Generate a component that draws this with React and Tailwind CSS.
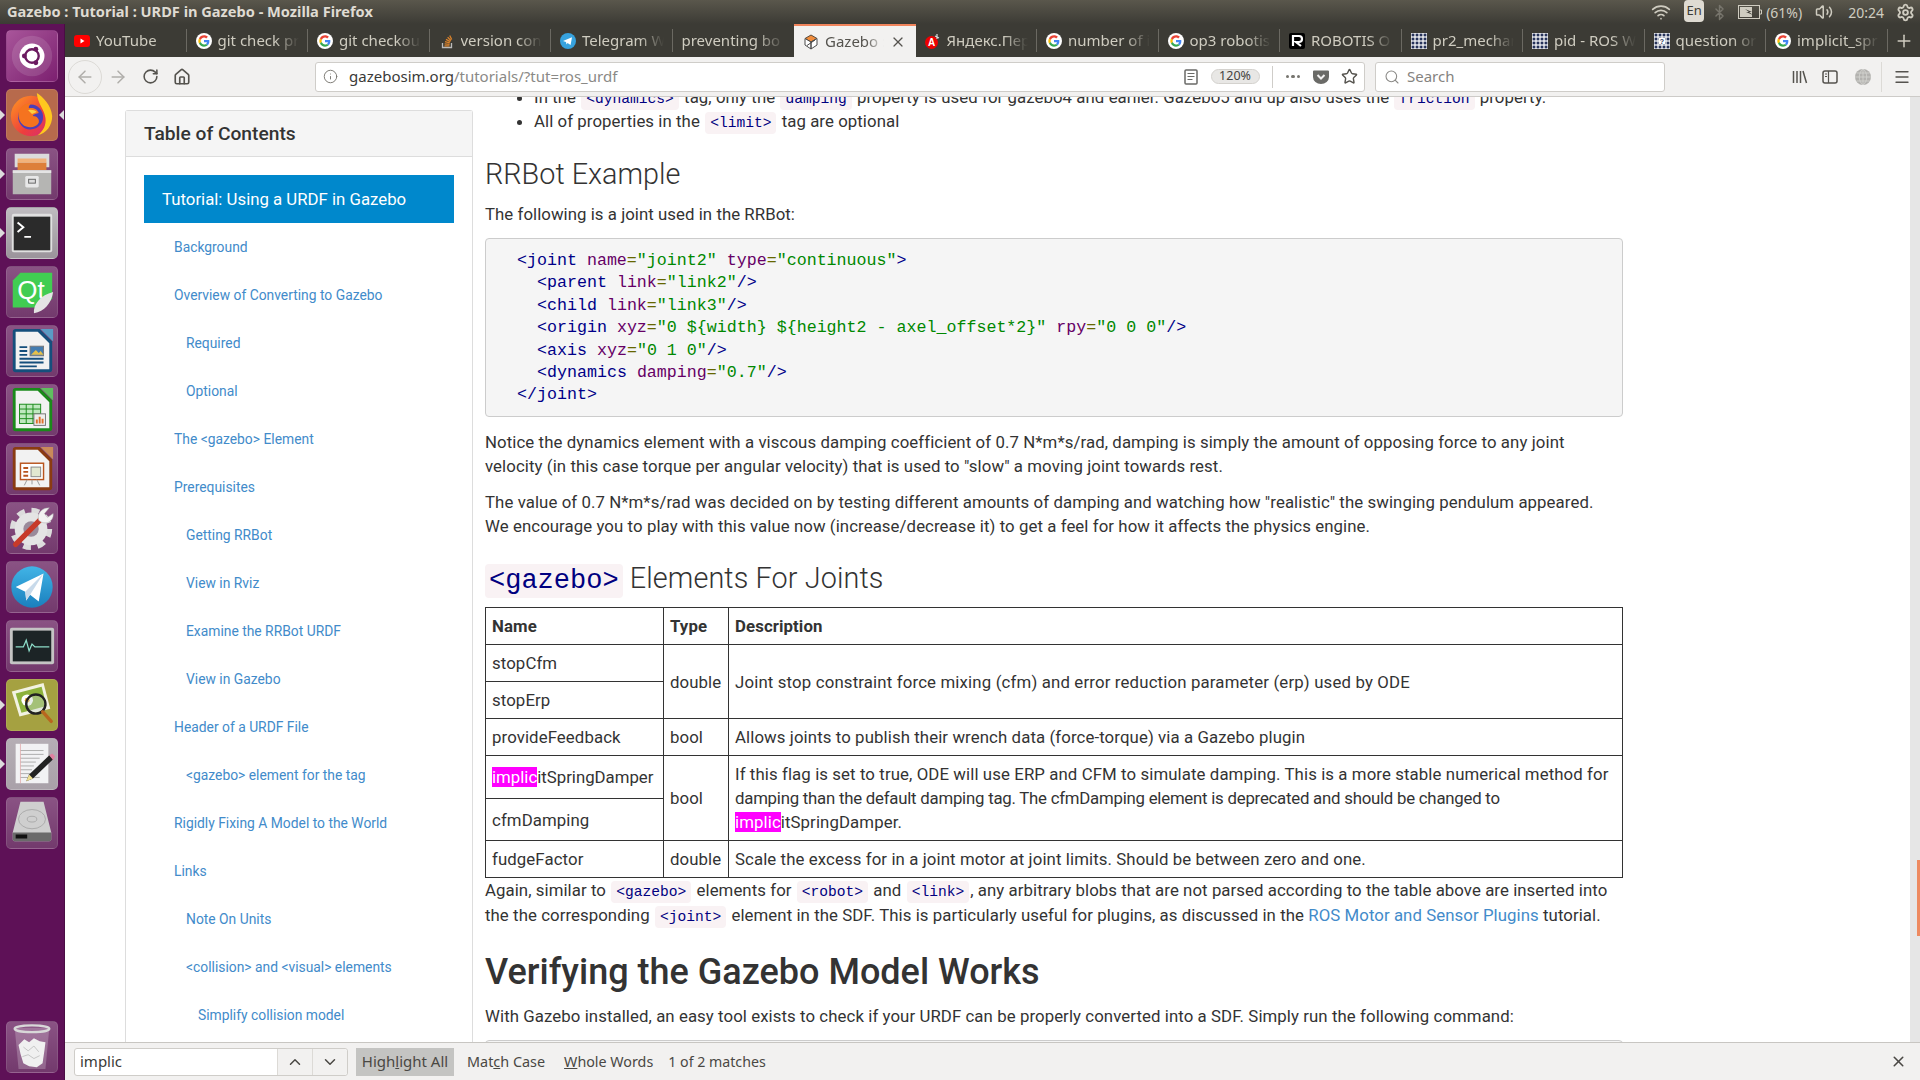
import { ArrowLeft, ArrowRight, RotateCw, Home, Info, Star, Search, Menu, X, ChevronUp, ChevronDown, Plus, Wifi, Volume2, Bluetooth, Settings } from "lucide-react";

const uiFont = "font-['Noto_Sans',sans-serif]";

function GoogleIcon() {
    return (
        <svg viewBox="0 0 48 48" className="w-4 h-4 rounded-full bg-white shrink-0">
            <g transform="translate(7 7) scale(.71)">
                <path fill="#EA4335" d="M24 9.5c3.5 0 6.7 1.2 9.2 3.6l6.9-6.9C35.9 2.4 30.5 0 24 0 14.6 0 6.5 5.4 2.6 13.2l8 6.2C12.5 13.6 17.800 9.500 24 9.500z" />
                <path fill="#4285F4" d="M46.500 24.500c0-1.600-.1-3.100-.4-4.500H24v9h12.700c-.6 2.900-2.200 5.400-4.700 7.100l7.700 6c4.500-4.200 6.800-10.300 6.800-17.600z" />
                <path fill="#FBBC05" d="M10.500 28.600c-.5-1.400-.8-3-.8-4.600s.3-3.200.8-4.600l-8-6.200C.9 16.500 0 20.100 0 24s.9 7.500 2.600 10.800l7.900-6.200z" />
                <path fill="#34A853" d="M24 48c6.500 0 11.900-2.100 15.900-5.800l-7.700-6c-2.200 1.500-4.900 2.300-8.200 2.300-6.200 0-11.500-4.200-13.400-9.900l-8 6.200C6.500 42.600 14.600 48 24 48z" />
            </g>
        </svg>
    );
}

function YoutubeIcon() {
    return (
        <svg viewBox="0 0 16 16" className="w-4 h-4 shrink-0">
            <rect x="0" y="2" width="16" height="12" rx="3" fill="#f00" />
            <path d="M6.500 5.500 10.500 8 6.500 10.500z" fill="#fff" />
        </svg>
    );
}

function StackIcon() {
    return (
        <svg viewBox="0 0 16 16" className="w-4 h-4 shrink-0" fill="none" stroke="#d9822b" strokeWidth="1.300">
            <path d="M3.500 10v4.500h9V10" stroke="#bbb" />
            <path d="M5.500 12.800h5M5.600 10.800l5 .5M6 8.600l4.800 1.300M7 6.300l4.400 2.300M8.600 4.200l3.400 3.300M10.700 2.500l2 4" />
        </svg>
    );
}

function TelegramTab() {
    return (
        <svg viewBox="0 0 16 16" className="w-4 h-4 shrink-0">
            <circle cx="8" cy="8" r="8" fill="#37a2de" />
            <path d="M3 8 12 4.300 10.600 12 7.500 9.900 6.500 11.500 6 9z" fill="#fff" />
        </svg>
    );
}

function GazeboTab() {
    return (
        <svg viewBox="0 0 16 16" className="w-4 h-4 shrink-0" strokeWidth="1">
            <path d="M8 1 14 4.500 8 8 2 4.500z" fill="#f08c3c" stroke="#5a4a3a" />
            <path d="M2 4.500v6.500l6 4V8zM14 4.500v6.500l-6 4V8z" fill="#fff" stroke="#4a4a4a" />
            <path d="M4 11.500 12 6" stroke="#4a4a4a" />
        </svg>
    );
}

function YandexTab() {
    return (
        <svg viewBox="0 0 16 16" className="w-4 h-4 shrink-0">
            <circle cx="6.500" cy="9.500" r="6.500" fill="#e00" />
            <text x="6.500" y="13" fontSize="10" fontWeight="700" fill="#fff" textAnchor="middle" fontFamily="Liberation Sans">A</text>
            <path d="M12 1v5M10 3l4 2" stroke="#ddd" strokeWidth="1.200" />
        </svg>
    );
}

function RobotisTab() {
    return (
        <svg viewBox="0 0 16 16" className="w-4 h-4 shrink-0">
            <rect width="16" height="16" rx="2" fill="#000" />
            <path d="M4 13V3h6a3 3 0 0 1 0 6H7l5 4" fill="none" stroke="#fff" strokeWidth="2.200" />
        </svg>
    );
}

function GridTab({ mark }) {
    const dots = [];
    for (let y = 0; y < 4; y++) for (let x = 0; x < 4; x++) dots.push([x, y]);
    return (
        <svg viewBox="0 0 16 16" className="w-4 h-4 shrink-0">
            <rect width="16" height="16" fill="#fff" />
            {dots.map(([x, y]) => <rect key={x + "-" + y} x={x * 4 + .6} y={y * 4 + .6} width="2.800" height="2.800" fill="#26325a" />)}
            {mark && <rect x="5" y="5" width="6" height="6" fill="#fff" />}
            {mark && <text x="8" y="11" fontSize="7" fontWeight="700" fill="#26325a" textAnchor="middle" fontFamily="Liberation Sans">?</text>}
        </svg>
    );
}

// titles are only as long as the tab strip shows them
const tabs = [
    { icon: <YoutubeIcon />, title: "YouTube" },
    { icon: <GoogleIcon />, title: "git check pr" },
    { icon: <GoogleIcon />, title: "git checkou" },
    { icon: <StackIcon />, title: "version con" },
    { icon: <TelegramTab />, title: "Telegram W" },
    { icon: null, title: "preventing bo" },
    { icon: <GazeboTab />, title: "Gazebo :", active: true },
    { icon: <YandexTab />, title: "Яндекс.Пер" },
    { icon: <GoogleIcon />, title: "number of i" },
    { icon: <GoogleIcon />, title: "op3 robotis" },
    { icon: <RobotisTab />, title: "ROBOTIS O" },
    { icon: <GridTab />, title: "pr2_mechar" },
    { icon: <GridTab />, title: "pid - ROS W" },
    { icon: <GridTab mark />, title: "question or" },
    { icon: <GoogleIcon />, title: "implicit_spr" },
];

function Tab({ tab, next }) {
    if (tab.active) {
        return (
            <div className="w-[121.5px] shrink-0 h-full flex items-center pl-[9px] pr-[10px] gap-[6px] bg-[#f2f1f0] border-t-2 border-[#f0845c] text-[#55534e]">
                {tab.icon}
                <span className="flex-1 overflow-hidden whitespace-nowrap [mask-image:linear-gradient(to_right,black_70%,transparent)]">{tab.title}</span>
                <X size={16} strokeWidth={1.800} className="text-[#55534e] shrink-0" />
            </div>
        );
    }
    return (
        <div className="w-[121.5px] shrink-0 h-full py-[5px]">
            <div className={"h-full flex items-center pl-[9px] pr-2 gap-[6px] " + (next ? "" : "border-r border-[#6b6962]")}>
                {tab.icon}
                <span className="flex-1 overflow-hidden whitespace-nowrap text-[#cfccc0] [mask-image:linear-gradient(to_right,black_70%,transparent)]">{tab.title}</span>
            </div>
        </div>
    );
}

function TopBar() {
    return (
        <div className={"h-6 shrink-0 flex items-center bg-gradient-to-b from-[#5a574c] to-[#3c3b35] text-[#dfdbd2] text-[14px] " + uiFont}>
            <span className="ml-[7px] font-bold text-[14.600px]">Gazebo : Tutorial : URDF in Gazebo - Mozilla Firefox</span>
            <div className="ml-auto flex items-center text-[#cfccc0]">
                <Wifi size={20} strokeWidth={2} />
                <span className="ml-[13px] w-5 h-[22px] -mt-[2px] flex items-center justify-center rounded-sm bg-[#dfdbd2] text-[#3c3b35] text-[13px]">En</span>
                <Bluetooth size={17} strokeWidth={2} className="ml-[7px] text-[#77756c]" />
                <svg viewBox="0 0 24 14" className="ml-[10px] w-6 h-[14px]" fill="none">
                    <rect x=".5" y=".5" width="21" height="13" stroke="#cfccc0" />
                    <rect x="2" y="2" width="12" height="10" fill="#cfccc0" />
                    <path d="M22 5h1.500v4H22" stroke="#cfccc0" />
                    <path d="M7 4l7 3-3 0 4 3-7-3 3 0z" fill="#3c3b35" />
                </svg>
                <span className="ml-[4px]">(61%)</span>
                <Volume2 size={18} strokeWidth={2} className="ml-[13px]" />
                <span className="ml-[15px]">20:24</span>
                <Settings size={19} strokeWidth={2.400} className="ml-[12px] mr-[5px]" />
            </div>
        </div>
    );
}

function Tile({ bg, left, right, children }) {
    return (
        <div className="relative h-[52px] w-[52px]">
            <div className={"w-full h-full rounded-[5px] border border-white/10 overflow-hidden " + bg}>
                {children}
            </div>
            {left && <div className="absolute left-[-6px] top-[21px] border-y-[5px] border-l-[5px] border-y-transparent border-l-[#dcdcdc]"></div>}
            {right && <div className="absolute right-[-6px] top-[21px] border-y-[5px] border-r-[5px] border-y-transparent border-r-[#dcdcdc]"></div>}
        </div>
    );
}

function Launcher() {
    const plain = "bg-gradient-to-b from-[#8a5384] to-[#733a6d]";
    return (
        <div className="w-[65px] shrink-0 h-full bg-[#5e1157] border-r border-[#4a0d44] flex flex-col items-center pt-[6px] gap-[7px] pb-[7px]">
            <Tile bg="bg-gradient-to-br from-[#a8559a] to-[#7c1f70]">
                <svg viewBox="0 0 52 52" className="w-full h-full">
                    <circle cx="26" cy="26" r="21" fill="#fff" opacity=".12" />
                    <circle cx="26" cy="26" r="13" fill="#fff" />
                    <circle cx="26" cy="26" r="7" fill="none" stroke="#6b1a60" strokeWidth="2.500" />
                    <circle cx="18" cy="26" r="2.500" fill="#6b1a60" />
                    <circle cx="30" cy="19" r="2.500" fill="#6b1a60" />
                    <circle cx="30" cy="33" r="2.500" fill="#6b1a60" />
                </svg>
            </Tile>
            <Tile bg="bg-[#b76a4c]" left right>
                <svg viewBox="0 0 52 52" className="w-full h-full">
                    <defs>
                        <linearGradient id="fx" x1="0" y1="0" x2="1" y2="1">
                            <stop offset="0" stopColor="#ff9a1f" />
                            <stop offset=".6" stopColor="#ee3d3d" />
                            <stop offset="1" stopColor="#d22c7a" />
                        </linearGradient>
                    </defs>
                    <circle cx="25" cy="27" r="21" fill="url(#fx)" />
                    <path d="M31 3c6 4 15 12 16 24 0 10-6 18-15 20 6-5 9-11 8-18-1-9-8-14-9-26z" fill="#ffc81f" />
                    <path d="M25 15a13 13 0 1 1-1 26 13 13 0 0 1 1-26z" fill="#4c3fb8" />
                    <path d="M12 22c2-5 8-9 13-8-2 2-3 4-2 5 4-1 9 1 10 5-2 1-6 1-6 3 4 0 7 3 6 7-2 4-8 6-13 4-6-2-9-9-8-16z" fill="#f5731f" />
                    <path d="M22 21c3-1 7 0 9 2l-5 2z" fill="#ffd040" />
                </svg>
            </Tile>
            <Tile bg={plain} left>
                <svg viewBox="0 0 52 52" className="w-full h-full">
                    <path d="M8 5h36v14H8z" fill="#dcdcdc" />
                    <path d="M11 14h30v8H11z" fill="#dd7f3a" />
                    <path d="M11 10h30v4H11z" fill="#f2b27a" />
                    <path d="M6 22h40v25H6z" fill="#b5b5b3" />
                    <path d="M6 22h40v3H6z" fill="#e4e4e4" />
                    <rect x="19" y="28" width="14" height="12" rx="1.500" fill="#e8e8e8" />
                    <rect x="22" y="31" width="8" height="5" fill="#666" />
                    <rect x="23" y="32" width="6" height="3" fill="#ddd" />
                </svg>
            </Tile>
            <Tile bg="bg-gradient-to-b from-[#bfbcc0] to-[#9b949b]" left>
                <svg viewBox="0 0 52 52" className="w-full h-full">
                    <rect x="5" y="6" width="42" height="40" rx="2" fill="#e0e0e0" />
                    <rect x="7" y="9" width="38" height="35" fill="#2b2b2b" />
                    <path d="M11 15l6 5-6 5" fill="none" stroke="#fff" strokeWidth="2" />
                    <path d="M18 30h7" stroke="#fff" strokeWidth="2" />
                </svg>
            </Tile>
            <Tile bg={plain}>
                <svg viewBox="0 0 52 52" className="w-full h-full">
                    <path d="M14 6h33v27l-9 9H6V14z" fill="#41cd52" />
                    <text x="25" y="33" fontSize="27" fontFamily="Liberation Sans" fill="#fff" textAnchor="middle">Qt</text>
                    <path d="M48 26c-2 12-9 20-20 22 -1-9 7-19 20-22z" fill="#e4e4e4" />
                </svg>
            </Tile>
            <Tile bg={plain}>
                <svg viewBox="0 0 52 52" className="w-full h-full">
                    <path d="M35 3h13v13z" fill="#5a9bc4" />
                    <path d="M9 3h25l13 13v29a3 3 0 0 1-3 3H9a3 3 0 0 1-3-3V6a3 3 0 0 1 3-3z" fill="#154f7c" />
                    <path d="M9 6h23l12 12v27H9z" fill="#f2f2f2" />
                    <path d="M13 22h8M13 26h8M13 30h8M13 34h25M13 38h25M13 42h18" stroke="#154f7c" strokeWidth="2" />
                    <rect x="24" y="21" width="14" height="10" fill="#447cb0" stroke="#777" />
                    <path d="M25 30l5-5 3 3 2-2 3 4z" fill="#e6c04a" />
                </svg>
            </Tile>
            <Tile bg={plain}>
                <svg viewBox="0 0 52 52" className="w-full h-full">
                    <path d="M35 3h13v13z" fill="#5fbf5f" />
                    <path d="M9 3h25l13 13v29a3 3 0 0 1-3 3H9a3 3 0 0 1-3-3V6a3 3 0 0 1 3-3z" fill="#1a8a1a" />
                    <path d="M9 6h23l12 12v27H9z" fill="#f2f2f2" />
                    <rect x="13" y="20" width="22" height="20" fill="#bfe8bf" stroke="#1a8a1a" />
                    <path d="M13 25h22M13 30h22M13 35h22M20 20v20M27 20v20" stroke="#1a8a1a" />
                    <rect x="28" y="30" width="12" height="12" fill="#eee" stroke="#777" />
                    <path d="M31 40v-4M34 40v-7M37 40v-5" stroke="#e0702a" strokeWidth="2" />
                </svg>
            </Tile>
            <Tile bg={plain}>
                <svg viewBox="0 0 52 52" className="w-full h-full">
                    <path d="M35 3h13v13z" fill="#c98a5a" />
                    <path d="M9 3h25l13 13v29a3 3 0 0 1-3 3H9a3 3 0 0 1-3-3V6a3 3 0 0 1 3-3z" fill="#8a3b12" />
                    <path d="M9 6h23l12 12v27H9z" fill="#f2f2f2" />
                    <rect x="14" y="20" width="24" height="17" fill="#fff" stroke="#b8541e" strokeWidth="1.500" />
                    <path d="M17 25h5M17 29h5M17 33h5" stroke="#b8541e" strokeWidth="2" />
                    <rect x="25" y="24" width="10" height="10" fill="#e2e8d0" stroke="#888" />
                    <path d="M21 37l-3 6M31 37l3 6M26 37v5" stroke="#999" />
                </svg>
            </Tile>
            <Tile bg={plain}>
                <svg viewBox="0 0 52 52" className="w-full h-full">
                    <circle cx="25" cy="27" r="19" fill="none" stroke="#dcdcdc" strokeWidth="6" strokeDasharray="8 6.900" />
                    <circle cx="25" cy="27" r="17" fill="#e4e4e4" />
                    <circle cx="25" cy="27" r="8" fill="#9a8a9a" />
                    <path d="M9 43 35 17" stroke="#c73a2a" strokeWidth="5.500" strokeLinecap="round" />
                    <path d="M33 18c-2-6 2-13 11-13l-5 6 3 4 6-4c1 8-8 13-15 7z" fill="#f2f2f2" stroke="#aaa" strokeWidth=".5" />
                </svg>
            </Tile>
            <Tile bg={plain}>
                <svg viewBox="0 0 52 52" className="w-full h-full">
                    <defs>
                        <linearGradient id="tg" x1="0" y1="0" x2="0" y2="1">
                            <stop offset="0" stopColor="#41b4e6" />
                            <stop offset="1" stopColor="#1a7fbd" />
                        </linearGradient>
                    </defs>
                    <circle cx="26" cy="26" r="21.500" fill="url(#tg)" />
                    <path d="M9 26 38 12 33 41 24 34 20 40 19 31z" fill="#fff" />
                    <path d="M19 31 38 12 24 34 20 40z" fill="#c8daea" />
                </svg>
            </Tile>
            <Tile bg={plain}>
                <svg viewBox="0 0 52 52" className="w-full h-full">
                    <rect x="3" y="7" width="46" height="38" rx="2" fill="#c4c4c4" />
                    <rect x="6" y="10" width="40" height="32" fill="#1c2426" />
                    <path d="M9 27h8l3-7 3 11 3-7 3 3h15" fill="none" stroke="#8cdcc8" strokeWidth="1.300" />
                </svg>
            </Tile>
            <Tile bg="bg-[#a5a141]" left>
                <svg viewBox="0 0 52 52" className="w-full h-full">
                    <path d="M5 12 38 3l7 27-32 8z" fill="#f2f2e2" />
                    <path d="M9 14 36 7l5 20-26 7z" fill="#8db23c" />
                    <circle cx="21" cy="21" r="6" fill="#fff" />
                    <circle cx="21" cy="21" r="2.500" fill="#e8a020" />
                    <circle cx="30" cy="25" r="10" fill="#c8d8d0" fillOpacity=".4" stroke="#222" strokeWidth="2.500" />
                    <path d="M37 33l9 10" stroke="#b8661e" strokeWidth="3.500" strokeLinecap="round" />
                </svg>
            </Tile>
            <Tile bg="bg-gradient-to-b from-[#b5aeb5] to-[#a9a1a9]" left>
                <svg viewBox="0 0 52 52" className="w-full h-full">
                    <rect x="9" y="5" width="34" height="41" fill="#f2f2f4" />
                    <path d="M14 12h24M14 16h24M14 20h20M14 24h16M14 28h14M14 32h12M14 36h10M14 40h20" stroke="#999" strokeWidth=".8" />
                    <path d="M14 5v41" stroke="#e0a0a0" strokeWidth=".7" />
                    <path d="M44 17l4 4-21 20-7 3 3-7z" fill="#222" />
                    <path d="M44 17l3-2 3 3-2 4z" fill="#e080a0" />
                    <path d="M23 37l4 4-7 3z" fill="#f0e090" />
                </svg>
            </Tile>
            <Tile bg={plain}>
                <svg viewBox="0 0 52 52" className="w-full h-full">
                    <path d="M14 4h24l8 32v7a2 2 0 0 1-2 2H8a2 2 0 0 1-2-2v-7z" fill="#cfcfcf" />
                    <ellipse cx="26" cy="22" rx="14" ry="10" fill="none" stroke="#aaa" strokeWidth="1" />
                    <ellipse cx="26" cy="22" rx="5" ry="3" fill="none" stroke="#aaa" strokeWidth="1" />
                    <path d="M6 36h40v7a2 2 0 0 1-2 2H8a2 2 0 0 1-2-2z" fill="#6a6a6a" />
                    <path d="M9 38h12v4H9z" fill="#111" />
                </svg>
            </Tile>
            <div className="mt-auto">
                <Tile bg={plain}>
                    <svg viewBox="0 0 52 52" className="w-full h-full">
                        <path d="M8 6h36l-4 43H12z" fill="#fff" fillOpacity=".22" />
                        <ellipse cx="26" cy="7" rx="18" ry="3.500" fill="none" stroke="#d8d8d8" strokeWidth="2.500" />
                        <path d="M12 24l6-6 5 3 5-4 6 3 6 1-1 8-2 14-6 4-8-1-6-3-3-10z" fill="#f0f0f0" />
                        <path d="M17 26l5 4 6-5 5 6M16 36l6-2 6 4 6-3" fill="none" stroke="#c4c4c4" />
                    </svg>
                </Tile>
            </div>
        </div>
    );
}

function NavBar() {
    return (
        <div className={"h-10 shrink-0 flex items-center bg-[#f2f1f0] border-b border-[#cdcbc8] text-[#55534e] " + uiFont}>
            <div className="ml-[3px] w-[34px] h-[34px] rounded-full border border-[#dcdad6] flex items-center justify-center">
                <ArrowLeft size={20} strokeWidth={1.800} className="text-[#b0aeaa]" />
            </div>
            <ArrowRight size={20} strokeWidth={1.800} className="ml-[6px] text-[#b0aeaa]" />
            <RotateCw size={17} strokeWidth={2.200} className="ml-[14px]" />
            <Home size={18} strokeWidth={2.200} className="ml-[14px]" />
            <div className="ml-[124px] w-[1050px] h-[30px] bg-white border border-[#cfcdc9] rounded-[3px] flex items-center text-[15px]">
                <Info size={15} strokeWidth={1.500} className="ml-[7px] text-[#77756f]" />
                <span className="ml-[11px] text-[#3a3a38]">gazebosim.org<span className="text-[#8a8986]">/tutorials/?tut=ros_urdf</span></span>
                <div className="ml-auto flex items-center">
                    <svg viewBox="0 0 14 16" className="w-[14px] h-4" fill="none" stroke="#6a6a67" strokeWidth="1.500">
                        <rect x="1" y="1" width="12" height="14" rx="1" />
                        <path d="M3.500 4.500h7M3.500 7.500h7M3.500 10.500h5" strokeWidth="1" />
                    </svg>
                    <span className="ml-[13px] w-[49px] h-[15px] flex items-center justify-center rounded-full bg-[#e8e7e5] border border-[#d4d2ce] text-[12.500px] text-[#45433f]">120%</span>
                    <div className="ml-[12px] w-px h-[22px] bg-[#cfcdc9]"></div>
                    <div className="ml-[13px] flex gap-[2px]">
                        <span className="w-[3.500px] h-[3.500px] rounded-full bg-[#77756f]"></span>
                        <span className="w-[3.500px] h-[3.500px] rounded-full bg-[#77756f]"></span>
                        <span className="w-[3.500px] h-[3.500px] rounded-full bg-[#77756f]"></span>
                    </div>
                    <svg viewBox="0 0 16 16" className="ml-[13px] w-4 h-4">
                        <path d="M1 1.500h14a1 1 0 0 1 1 1V8a8 7 0 0 1-16 0V2.500a1 1 0 0 1 1-1z" fill="#6a6a67" />
                        <path d="M4.500 6 8 9.500 11.500 6" fill="none" stroke="#f2f1f0" strokeWidth="2" />
                    </svg>
                    <Star size={17} strokeWidth={2} className="ml-[12px] mr-[6px] text-[#55534e]" />
                </div>
            </div>
            <div className="ml-[10px] w-[290px] h-[30px] bg-white border border-[#cfcdc9] rounded-[3px] flex items-center text-[15px]">
                <Search size={16} strokeWidth={1.600} className="ml-2 text-[#8a8986]" />
                <span className="ml-[7px] text-[#85837f]">Search</span>
            </div>
            <svg viewBox="0 0 16 16" className="ml-[127px] w-4 h-4" fill="none" stroke="#55534e" strokeWidth="1.500">
                <path d="M1.500 2v12M5 2v12M8.500 2v12M11 2l3.500 12" />
            </svg>
            <svg viewBox="0 0 16 16" className="ml-[14px] w-4 h-4" fill="none" stroke="#55534e" strokeWidth="1.500">
                <rect x="1" y="2" width="14" height="12" rx="2" />
                <path d="M6.500 2v12M3 5h2M3 7.500h2" strokeWidth="1.200" />
            </svg>
            <svg viewBox="0 0 16 16" className="ml-[17px] w-4 h-4" fill="none" stroke="#d6d5d2" strokeWidth=".8">
                <circle cx="8" cy="8" r="8" fill="#b3b2af" stroke="none" />
                <path d="M0 8h16M1.500 4h13M1.500 12h13M8 0v16M8 0c-5 4-5 12 0 16M8 0c5 4 5 12 0 16" />
            </svg>
            <div className="ml-[10px] w-px h-[30px] bg-[#dcdad6]"></div>
            <Menu size={18} strokeWidth={1.800} className="ml-[11px]" />
        </div>
    );
}

const tocItems = [
    ["Background", "pl-[30px]"],
    ["Overview of Converting to Gazebo", "pl-[30px]"],
    ["Required", "pl-[42px]"],
    ["Optional", "pl-[42px]"],
    ["The <gazebo> Element", "pl-[30px]"],
    ["Prerequisites", "pl-[30px]"],
    ["Getting RRBot", "pl-[42px]"],
    ["View in Rviz", "pl-[42px]"],
    ["Examine the RRBot URDF", "pl-[42px]"],
    ["View in Gazebo", "pl-[42px]"],
    ["Header of a URDF File", "pl-[30px]"],
    ["<gazebo> element for the tag", "pl-[42px]"],
    ["Rigidly Fixing A Model to the World", "pl-[30px]"],
    ["Links", "pl-[30px]"],
    ["Note On Units", "pl-[42px]"],
    ["<collision> and <visual> elements", "pl-[42px]"],
    ["Simplify collision model", "pl-[54px]"],
];

function Sidebar() {
    return (
        <div className="w-[348px] shrink-0 mt-[13px] border-x border-t border-[#ddd] rounded-t-[3px] h-[1000px]">
            <div className="h-[46px] pt-px bg-[#f5f5f5] border-b border-[#ddd] flex items-center pl-[18px] text-[#333] text-[19.200px] font-medium">Table of Contents</div>
            <div className="px-[18px] pt-[18px]">
                <div className="h-12 pt-px bg-[#0088cc] text-white text-[16.800px] flex items-center pl-[18px]">Tutorial: Using a URDF in Gazebo</div>
                {tocItems.map(([name, indent]) => (
                    <div key={name} className={"h-12 pt-px flex items-center text-[13.850px] text-[#428bca] " + indent}>{name}</div>
                ))}
            </div>
        </div>
    );
}

function C({ children }) {
    return <code className="font-['Liberation_Mono',monospace] text-[14.600px] leading-none tracking-normal text-[#000080] bg-[#f9f2f4] rounded-[4px] px-[5px] py-[3px] mx-[1px]">{children}</code>;
}

function Hl({ children }) {
    return <span className="bg-[#ff00ff] text-white">{children}</span>;
}

function CodeLine({ indent, parts }) {
    return (
        <div className={"h-[22.400px] " + (indent ? "pl-[20px]" : "")}>
            {parts.map(([type, text], i) => {
                const color = { t: "text-[#000088]", a: "text-[#660066]", p: "text-[#666600]", s: "text-[#008800]" }[type];
                return <span key={i} className={color}>{text}</span>;
            })}
        </div>
    );
}

function Code() {
    return (
        <div className="mt-[12px] h-[179px] bg-[#f5f5f5] border border-[#ccc] rounded-[4px] pl-[31px] pt-[11px] font-['Liberation_Mono',monospace] text-[16.650px] leading-[22.400px] whitespace-pre tracking-normal">
            <CodeLine parts={[["t", "<joint "], ["a", "name"], ["p", "="], ["s", '"joint2" '], ["a", "type"], ["p", "="], ["s", '"continuous"'], ["t", ">"]]} />
            <CodeLine indent parts={[["t", "<parent "], ["a", "link"], ["p", "="], ["s", '"link2"'], ["t", "/>"]]} />
            <CodeLine indent parts={[["t", "<child "], ["a", "link"], ["p", "="], ["s", '"link3"'], ["t", "/>"]]} />
            <CodeLine indent parts={[["t", "<origin "], ["a", "xyz"], ["p", "="], ["s", '"0 ${width} ${height2 - axel_offset*2}" '], ["a", "rpy"], ["p", "="], ["s", '"0 0 0"'], ["t", "/>"]]} />
            <CodeLine indent parts={[["t", "<axis "], ["a", "xyz"], ["p", "="], ["s", '"0 1 0"'], ["t", "/>"]]} />
            <CodeLine indent parts={[["t", "<dynamics "], ["a", "damping"], ["p", "="], ["s", '"0.7"'], ["t", "/>"]]} />
            <CodeLine parts={[["t", "</joint>"]]} />
        </div>
    );
}

function Td({ children, rowSpan, className }) {
    return <td rowSpan={rowSpan} className={"border border-[#333] px-[6px] align-middle " + (className || "")}>{children}</td>;
}

function JointTable() {
    return (
        <table className="mt-[9px] w-[1138px] table-fixed border-collapse leading-[24px] tracking-[0.1px]">
            <colgroup>
                <col className="w-[178px]" />
                <col className="w-[65px]" />
                <col />
            </colgroup>
            <tbody>
                <tr className="h-[37px] font-bold"><Td>Name</Td><Td>Type</Td><Td>Description</Td></tr>
                <tr className="h-[37px]"><Td>stopCfm</Td><Td rowSpan={2}>double</Td><Td rowSpan={2} className="tracking-[0.16px]">Joint stop constraint force mixing (cfm) and error reduction parameter (erp) used by ODE</Td></tr>
                <tr className="h-[37px]"><Td>stopErp</Td></tr>
                <tr className="h-[37px]"><Td>provideFeedback</Td><Td>bool</Td><Td>Allows joints to publish their wrench data (force-torque) via a Gazebo plugin</Td></tr>
                <tr className="h-[43px]">
                    <Td className="whitespace-nowrap tracking-normal"><Hl>implic</Hl>itSpringDamper</Td>
                    <Td rowSpan={2}>bool</Td>
                    <Td rowSpan={2} className="whitespace-nowrap">
                        If this flag is set to true, ODE will use ERP and CFM to simulate damping. This is a more stable numerical method for<br />
                        <span className="tracking-[-0.23px]">damping than the default damping tag. The cfmDamping element is deprecated and should be changed to</span><br />
                        <Hl>implic</Hl>itSpringDamper.
                    </Td>
                </tr>
                <tr className="h-[42px]"><Td>cfmDamping</Td></tr>
                <tr className="h-[37px]"><Td>fudgeFactor</Td><Td>double</Td><Td>Scale the excess for in a joint motor at joint limits. Should be between zero and one.</Td></tr>
            </tbody>
        </table>
    );
}

function Article() {
    return (
        <div className="ml-[12px] w-[1138px] shrink-0 -mt-[12px] text-[16.800px] leading-[24px] text-[#333]">
            <ul className="list-disc pl-[49px] tracking-[0.07px]">
                <li className="whitespace-nowrap">In the <C>&lt;dynamics&gt;</C> tag, only the <C>damping</C> property is used for gazebo4 and earlier. Gazebo5 and up also uses the <C>friction</C> property.</li>
                <li>All of properties in the <C>&lt;limit&gt;</C> tag are optional</li>
            </ul>
            <h2 className="mt-[24px] h-[34px] text-[28.800px] leading-[34px] font-light">RRBot Example</h2>
            <p className="mt-[11px] tracking-[0.05px]">The following is a joint used in the RRBot:</p>
            <Code />
            <p className="mt-[13px] whitespace-nowrap tracking-[0.09px]">Notice the dynamics element with a viscous damping coefficient of 0.7 N*m*s/rad, damping is simply the amount of opposing force to any joint<br />velocity (in this case torque per angular velocity) that is used to "slow" a moving joint towards rest.</p>
            <p className="mt-[12px] whitespace-nowrap tracking-[0.08px]">The value of 0.7 N*m*s/rad was decided on by testing different amounts of damping and watching how "realistic" the swinging pendulum appeared.<br />We encourage you to play with this value now (increase/decrease it) to get a feel for how it affects the physics engine.</p>
            <h2 className="mt-[20px] h-[40px] text-[28.800px] leading-[40px] font-light tracking-[0.1px]"><code className="font-['Liberation_Mono',monospace] text-[27px] tracking-normal text-[#000080] bg-[#f9f2f4] rounded-[4px] px-[4px] py-[2px]">&lt;gazebo&gt;</code> Elements For Joints</h2>
            <JointTable />
            <p className="leading-[25px] whitespace-nowrap tracking-[0.07px]">Again, similar to <C>&lt;gazebo&gt;</C> elements for <C>&lt;robot&gt;</C> and <C>&lt;link&gt;</C>, any arbitrary blobs that are not parsed according to the table above are inserted into<br />the the corresponding <C>&lt;joint&gt;</C> element in the SDF. This is particularly useful for plugins, as discussed in the <span className="text-[#428bca]">ROS Motor and Sensor Plugins</span> tutorial.</p>
            <h1 className="mt-[22px] h-[44px] text-[36px] leading-[44px] font-medium">Verifying the Gazebo Model Works</h1>
            <p className="mt-[10px] tracking-[0.08px]">With Gazebo installed, an easy tool exists to check if your URDF can be properly converted into a SDF. Simply run the following command:</p>
            <div className="mt-[12px] h-[60px] bg-[#f5f5f5] border border-[#ccc] rounded-[4px]"></div>
        </div>
    );
}

function FindBar() {
    return (
        <div className={"h-[38px] shrink-0 flex items-center bg-[#f2f1f0] border-t border-[#c8c6c2] text-[15px] text-[#4a4844] " + uiFont}>
            <div className="ml-[9px] w-[274px] h-7 bg-white border border-[#cfcdc9] rounded-[3px] flex items-center">
                <span className="flex-1 pl-[5px] text-[#3a3a38]">implic</span>
                <div className="w-[35px] h-full border-l border-[#dcdad6] bg-[#f2f1f0] flex items-center justify-center"><ChevronUp size={18} strokeWidth={2} /></div>
                <div className="w-[35px] h-full border-l border-[#dcdad6] bg-[#f2f1f0] flex items-center justify-center rounded-r-[3px]"><ChevronDown size={18} strokeWidth={2} /></div>
            </div>
            <div className="ml-2 w-[98px] h-7 bg-[#c4c4c2] flex items-center justify-center">High<u>l</u>ight All</div>
            <span className="ml-[13px] text-[14.400px]">Mat<u>c</u>h Case</span>
            <span className="ml-[19px] text-[14.300px]"><u>W</u>hole Words</span>
            <span className="ml-[15px] text-[14.200px]">1 of 2 matches</span>
            <X size={17} strokeWidth={2.200} className="ml-auto mr-[13px]" />
        </div>
    );
}

export default function App() {
    return (
        <div className="h-screen w-screen overflow-hidden flex flex-col font-['Roboto',sans-serif]">
            <TopBar />
            <div className="flex-1 flex min-h-0">
                <Launcher />
                <div className="flex-1 min-w-0 flex flex-col">
                    <div className={"h-[33px] shrink-0 flex items-center bg-[#3c3b35] text-[15px] " + uiFont}>
                        {tabs.map((tab, i) => (
                            <Tab key={i} tab={tab} next={tabs[i + 1] && tabs[i + 1].active || tab.active} />
                        ))}
                        <Plus size={20} strokeWidth={1.800} className="ml-[6px] text-[#cfccc0]" />
                    </div>
                    <NavBar />
                    <div className="flex-1 min-h-0 flex bg-white">
                        <div className="flex-1 min-w-0 flex overflow-hidden pl-[60px]">
                            <Sidebar />
                            <Article />
                        </div>
                        <div className="relative w-[10px] shrink-0 bg-[#e6e6e6]">
                            <div className="absolute right-0 top-[763px] w-[3px] h-[76px] bg-[#ee8a60]"></div>
                        </div>
                    </div>
                    <FindBar />
                </div>
            </div>
        </div>
    );
}
